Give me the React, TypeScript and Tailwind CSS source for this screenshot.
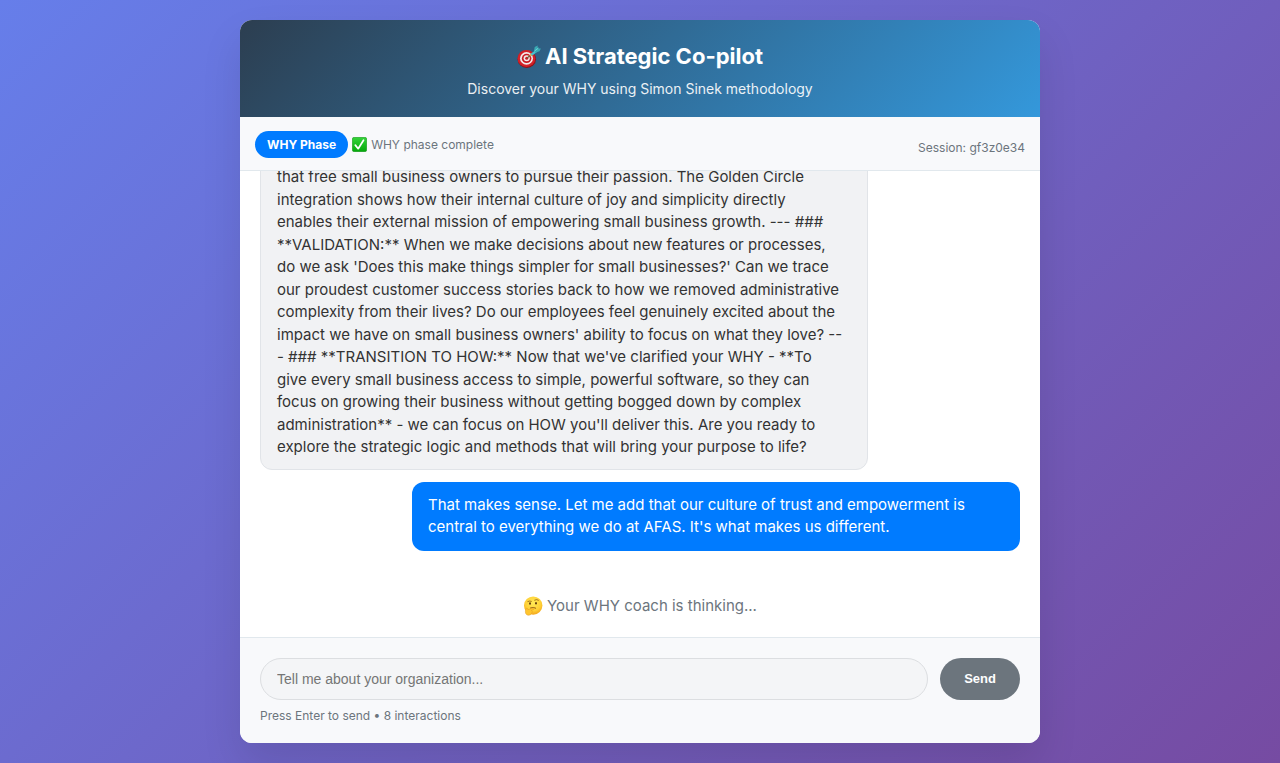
import React from "react";

const coachLines = [
  "that free small business owners to pursue their passion. The Golden Circle",
  "integration shows how their internal culture of joy and simplicity directly",
  "enables their external mission of empowering small business growth. --- ###",
  "**VALIDATION:** When we make decisions about new features or processes,",
  "do we ask 'Does this make things simpler for small businesses?' Can we trace",
  "our proudest customer success stories back to how we removed administrative",
  "complexity from their lives? Do our employees feel genuinely excited about the",
  "impact we have on small business owners' ability to focus on what they love? --",
  "- ### **TRANSITION TO HOW:** Now that we've clarified your WHY - **To",
  "give every small business access to simple, powerful software, so they can",
  "focus on growing their business without getting bogged down by complex",
  "administration** - we can focus on HOW you'll deliver this. Are you ready to",
  "explore the strategic logic and methods that will bring your purpose to life?",
];

const userLines = [
  "That makes sense. Let me add that our culture of trust and empowerment is",
  "central to everything we do at AFAS. It's what makes us different.",
];

function TargetIcon() {
  return (
    <svg className="size-6 shrink-0" viewBox="0 0 24 24" aria-hidden="true">
      <ellipse cx="9.8" cy="15.2" rx="9.2" ry="8.7" fill="#8f1016" />
      <ellipse cx="9.4" cy="14.6" rx="8.9" ry="8.5" fill="#d32027" />
      <ellipse cx="9.5" cy="14.4" rx="6.5" ry="6.3" fill="#f4e9ea" />
      <ellipse cx="9.6" cy="14.4" rx="4.8" ry="4.6" fill="#c91b23" />
      <ellipse cx="9.7" cy="14.3" rx="3.1" ry="3" fill="#f4e9ea" />
      <ellipse cx="9.7" cy="14.3" rx="1.5" ry="1.5" fill="#c91b23" />
      <path d="M10 14 14.3 10.8" stroke="#6d5a35" strokeWidth="1.1" />
      <path d="m12.9 10.3 5.4-3.8 1.3 1.7-5.2 4z" fill="#43c3cf" />
      <path d="m12.3 10.9 1.4-1.1 1.3 1.6-1.5.8z" fill="#e0b04d" />
      <path d="m17 7.1.7-4 2.9-1.6.1 2.2.9.9 2.3-.1-1.4 2.7-4 1.5z" fill="#39a9b4" />
      <path d="m17.5 7.2 4-3.3" stroke="#80e5e7" strokeWidth=".7" />
    </svg>
  );
}

function CheckIcon() {
  return (
    <svg className="size-[15px] shrink-0" viewBox="0 0 15 15" aria-hidden="true">
      <defs>
        <linearGradient id="check-fill" x1="0" y1="0" x2="0" y2="1">
          <stop offset="0" stopColor="#35d43a" />
          <stop offset="1" stopColor="#05a80b" />
        </linearGradient>
      </defs>
      <rect x=".3" y=".3" width="14.4" height="14.4" rx="2" fill="url(#check-fill)" stroke="#17941c" strokeWidth=".6" />
      <path d="m3.3 8.1 2.9 3.6 5.3-8.5" fill="none" stroke="#fff" strokeWidth="1.7" strokeLinecap="round" strokeLinejoin="round" />
    </svg>
  );
}

function ThinkingIcon() {
  return (
    <svg className="size-5 shrink-0" viewBox="0 0 20 20" aria-hidden="true">
      <defs>
        <radialGradient id="face-fill" cx=".5" cy=".35" r=".65">
          <stop offset="0" stopColor="#ffe957" />
          <stop offset=".65" stopColor="#ffd036" />
          <stop offset="1" stopColor="#f3a51c" />
        </radialGradient>
      </defs>
      <circle cx="10.2" cy="9.6" r="9.2" fill="url(#face-fill)" />
      <ellipse cx="7" cy="7.5" rx=".9" ry="1.3" fill="#60380d" />
      <ellipse cx="13" cy="7.3" rx=".9" ry="1.3" fill="#60380d" />
      <path d="M4.8 5.5Q6.7 4.5 8.4 5.3M11.6 4.1q2-1.2 3.9.1" fill="none" stroke="#84500f" strokeWidth=".7" strokeLinecap="round" />
      <path d="M7.5 11.9q3-1.1 5.2.2" fill="none" stroke="#7a430d" strokeWidth=".8" strokeLinecap="round" />
      <path d="M3.3 12.5c.8-.7 1.5 0 1.6 1.2l5-1.5c1.2-.2 1.5 1.1.4 1.5l-2 .7c1 .3 1.1 1.1.6 1.6.3.7 0 1.2-.5 1.5-.3 1.5-2.4 2-4 1.5-2.5-.8-2.4-4.5-1.1-6.5z" fill="#ffc52e" stroke="#e39a22" strokeWidth=".5" />
    </svg>
  );
}

export default function App() {
  return (
    <div className="flex h-screen justify-center bg-linear-[135deg,#667eea,#764ba2] p-5 font-[Inter,'Noto_Sans',sans-serif] text-[#333]">
      <main className="flex w-full max-w-[800px] flex-col overflow-hidden rounded-xl bg-white shadow-[0_20px_40px_rgba(0,0,0,0.1)]">
        <header className="flex flex-col items-center gap-2 bg-linear-[135deg,#2c3e50,#3498db] p-5 text-white">
          <h1 className="flex items-center gap-1 text-[22px] leading-8 font-bold">
            <TargetIcon />
            AI Strategic Co-pilot
          </h1>
          <p className="text-sm leading-[17px] opacity-90">Discover your WHY using Simon Sinek methodology</p>
        </header>

        <div className="flex items-center justify-between border-b border-[#e1e8ed] bg-[#f8f9fb] px-[15px] pt-3.5 pb-3 text-xs text-[#6c757d]">
          <div className="flex items-center gap-1">
            <span className="rounded-full bg-[#007bff] px-3 py-[5px] leading-[17px] font-bold text-white">WHY Phase</span>
            <CheckIcon />
            <span>WHY phase complete</span>
          </div>
          <span className="pt-1.5">Session: gf3z0e34</span>
        </div>

        <section aria-label="Conversation" className="flex min-h-0 flex-1 flex-col justify-end overflow-hidden px-5 text-[15px] leading-normal">
          <div className="mb-3 w-4/5 self-start rounded-xl border border-[#e1e4e8] bg-[#f1f2f4] px-4 pt-3 pb-2.5">
            {coachLines.map((line) => (
              <span key={line} className="block whitespace-nowrap">{line}</span>
            ))}
          </div>
          <div className="w-4/5 self-end rounded-xl bg-[#007bff] px-4 py-3 text-white">
            {userLines.map((line) => (
              <span key={line} className="block whitespace-nowrap">{line}</span>
            ))}
          </div>
          <div role="status" className="flex items-center justify-center gap-1 pt-11 pb-5 text-[#6c757d]">
            <ThinkingIcon />
            Your WHY coach is thinking...
          </div>
        </section>

        <form className="border-t border-[#e1e8ed] bg-[#f8f9fb] p-5" onSubmit={(event) => event.preventDefault()}>
          <div className="flex gap-3 font-['Liberation_Sans',sans-serif]">
            <input
              type="text"
              aria-label="Tell me about your organization"
              placeholder="Tell me about your organization..."
              className="h-[42px] min-w-0 flex-1 rounded-full border border-[#dcdee1] bg-[#f4f5f7] px-4 text-sm outline-none placeholder:text-[#757575]"
            />
            <button type="submit" className="rounded-full bg-[#6c757d] px-6 text-[13px] font-bold text-white">Send</button>
          </div>
          <p className="mt-2 text-xs leading-[15px] text-[#6c757d]">Press Enter to send • 8 interactions</p>
        </form>
      </main>
    </div>
  );
}
